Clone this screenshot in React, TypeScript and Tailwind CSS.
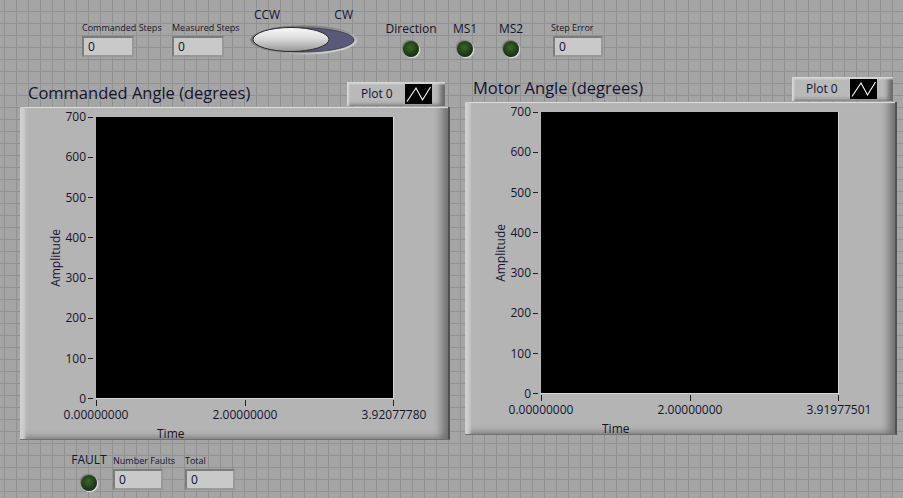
import React from "react";

const font = "font-['Open_Sans',_'Liberation_Sans',_sans-serif]";

function Numeric({ label, wide = false, inset = false }: { label: string; wide?: boolean; inset?: boolean }) {
  return (
    <div className={`flex flex-col ${wide ? "w-[52px]" : "w-[50px]"}`}>
      <span className="text-[9px] leading-[12px] text-[#141430] whitespace-nowrap">{label}</span>
      <div
        className={`mt-[2px] h-[21px] ${wide ? "w-[52px]" : "w-[50px]"} ${inset ? "ml-[2px]" : ""} border-[2px] border-t-[#7c7c7c] border-l-[#7c7c7c] border-r-[#989898] border-b-[#989898] bg-[#c9c9c9] pl-[4px] text-[12px] leading-[17px] text-[#101028]`}
      >
        0
      </div>
    </div>
  );
}

function Led() {
  return (
    <div className="h-[16px] w-[16px] rounded-full bg-[radial-gradient(circle_at_45%_40%,#3a6628_0%,#22441a_45%,#122a0c_80%)] shadow-[1px_1px_1px_#e8e8e8,-1px_-1px_1px_#7a7a7a]" />
  );
}

function Toggle() {
  return (
    <svg width="108" height="30" viewBox="0 0 108 30">
      <defs>
        <linearGradient id="rim" x1="0" y1="0" x2="1" y2="1">
          <stop offset="0" stopColor="#5a5a5a" />
          <stop offset="0.6" stopColor="#9c9c9c" />
          <stop offset="1" stopColor="#f4f4f4" />
        </linearGradient>
        <linearGradient id="btn" x1="0" y1="0" x2="0" y2="1">
          <stop offset="0" stopColor="#fafafa" />
          <stop offset="0.45" stopColor="#dcdcdc" />
          <stop offset="1" stopColor="#969696" />
        </linearGradient>
      </defs>
      <ellipse cx="54" cy="15" rx="53.5" ry="14.5" fill="url(#rim)" />
      <ellipse cx="54" cy="15" rx="50" ry="12" fill="#5a5978" stroke="#3a3a4a" strokeWidth="0.8" />
      <ellipse cx="41" cy="14.5" rx="38" ry="12" fill="url(#btn)" stroke="#2a2a2a" strokeWidth="1" />
    </svg>
  );
}

function PlotIcon() {
  return (
    <svg width="27" height="20" viewBox="0 0 27 20" className="bg-black">
      <polyline points="2,17.5 11,4 17.5,16 25.5,3" fill="none" stroke="#ffffff" strokeWidth="1.1" />
    </svg>
  );
}

const yTicks = ["700", "600", "500", "400", "300", "200", "100", "0"];

function Graph({
  title,
  xMax,
  right = false,
}: {
  title: string;
  xMax: string;
  right?: boolean;
}) {
  return (
    <div className={`flex flex-col ${right ? "w-[432px] ml-[15px] mt-[2px]" : "w-[430px] ml-[20px] mt-[7px]"}`}>
      <div className="flex h-[25px] items-start justify-between">
        <span className="ml-[8px] text-[16.5px] leading-[22px] text-[#141430] whitespace-nowrap">{title}</span>
        <div
          className={`flex h-[24px] ${right ? "w-[101px] mr-[4px]" : "w-[98px] mr-[5px]"} items-center bg-[#b9b9b9] pl-[14px] shadow-[inset_3px_3px_2px_-1px_#d8d8d8,inset_-7px_-3px_4px_-2px_#6c6c6c]`}
        >
          <span className="text-[12px] leading-[16px] text-[#141430]">Plot 0</span>
          <div className="ml-[12px] flex">
            <PlotIcon />
          </div>
        </div>
      </div>
      <div className="flex h-[333px] flex-col border-r-[2px] border-b-[1px] border-r-[#505050] border-b-[#707070] bg-[#b4b4b4] shadow-[inset_8px_0_3px_-3px_#cfcfcf,inset_0_2px_1px_-1px_#e2e2e2,inset_-12px_0_8px_-6px_#707070,inset_0_-6px_6px_-4px_#7c7c7c]">
        <div className="mt-[2px] flex items-start">
          <div className="ml-[29px] flex h-[298px] w-[14px] items-center justify-center">
            <span className="rotate-180 text-[12px] leading-[14px] text-[#141430] [writing-mode:vertical-rl]">
              Amplitude
            </span>
          </div>
          <div className="flex h-[298px] w-[30px] flex-col justify-between">
            {yTicks.map((t) => (
              <div key={t} className="flex h-[16px] items-center justify-end gap-[2px]">
                <span className="text-[12px] leading-[16px] text-[#141430]">{t}</span>
                <div className="h-[1px] w-[5px] bg-[#202020]" />
              </div>
            ))}
          </div>
          <div className="ml-[3px] mt-[8px] h-[282px] w-[298px] border-r border-b border-r-[#d6d6d6] border-b-[#d6d6d6] bg-black" />
        </div>
        <div className="-mt-[8px] flex flex-col">
          <div className="ml-[76px] mt-[1px] flex h-[6px] w-[298px] justify-between">
            <div className="h-[6px] w-[1px] bg-[#202020]" />
            <div className="h-[6px] w-[1px] bg-[#202020]" />
            <div className="h-[6px] w-[1px] bg-[#202020]" />
          </div>
          <div className="ml-[43px] mt-[2px] flex w-[364px] justify-between">
            {["0.00000000", "2.00000000", xMax].map((l) => (
              <span key={l} className="w-[66px] text-center text-[12px] leading-[14px] text-[#141430] whitespace-nowrap">
                {l}
              </span>
            ))}
          </div>
          <span className="ml-[137px] mt-[5px] text-[12px] leading-[14px] text-[#141430]">Time</span>
        </div>
      </div>
    </div>
  );
}

export default function App() {
  return (
    <div
      className={`${font} h-[498px] w-[903px] overflow-hidden bg-[#a5a5a5] bg-[linear-gradient(to_right,#919191_1px,transparent_1px),linear-gradient(to_bottom,#919191_1px,transparent_1px)] bg-size-[12px_12px] bg-position-[4px_11px]`}
    >
      {/* top controls */}
      <div className="flex h-[75px] items-start">
        <div className="ml-[82px] mt-[22px]">
          <Numeric label="Commanded Steps" wide />
        </div>
        <div className="ml-[38px] mt-[22px]">
          <Numeric label="Measured Steps" wide />
        </div>
        <div className="ml-[26px] mt-[7px] flex w-[108px] flex-col">
          <div className="flex h-[16px] justify-between px-[4px] text-[12px] leading-[16px] text-[#141430]">
            <span>CCW</span>
            <span className="mr-[1px]">CW</span>
          </div>
          <div className="mt-[2px] flex">
            <Toggle />
          </div>
        </div>
        <div className="ml-[29px] mt-[21px] flex w-[48px] flex-col items-center">
          <span className="text-[12px] leading-[16px] text-[#141430]">Direction</span>
          <div className="mt-[4px]">
            <Led />
          </div>
        </div>
        <div className="ml-[6px] mt-[21px] flex w-[48px] flex-col items-center">
          <span className="text-[12px] leading-[16px] text-[#141430]">MS1</span>
          <div className="mt-[4px]">
            <Led />
          </div>
        </div>
        <div className="-ml-[2px] mt-[21px] flex w-[48px] flex-col items-center">
          <span className="text-[12px] leading-[16px] text-[#141430]">MS2</span>
          <div className="mt-[4px]">
            <Led />
          </div>
        </div>
        <div className="ml-[16px] mt-[22px]">
          <Numeric label="Step Error" inset />
        </div>
      </div>

      {/* graphs */}
      <div className="flex items-start">
        <Graph title="Commanded Angle (degrees)" xMax="3.92077780" />
        <Graph title="Motor Angle (degrees)" xMax="3.91977501" right />
      </div>

      {/* bottom controls */}
      <div className="flex items-start">
        <div className="ml-[70px] mt-[12px] flex w-[38px] flex-col items-center">
          <span className="text-[12px] leading-[16px] text-[#141430]">FAULT</span>
          <div className="mt-[7px]">
            <Led />
          </div>
        </div>
        <div className="ml-[5px] mt-[15px]">
          <Numeric label="Number Faults" />
        </div>
        <div className="ml-[22px] mt-[15px]">
          <Numeric label="Total" />
        </div>
      </div>
    </div>
  );
}
